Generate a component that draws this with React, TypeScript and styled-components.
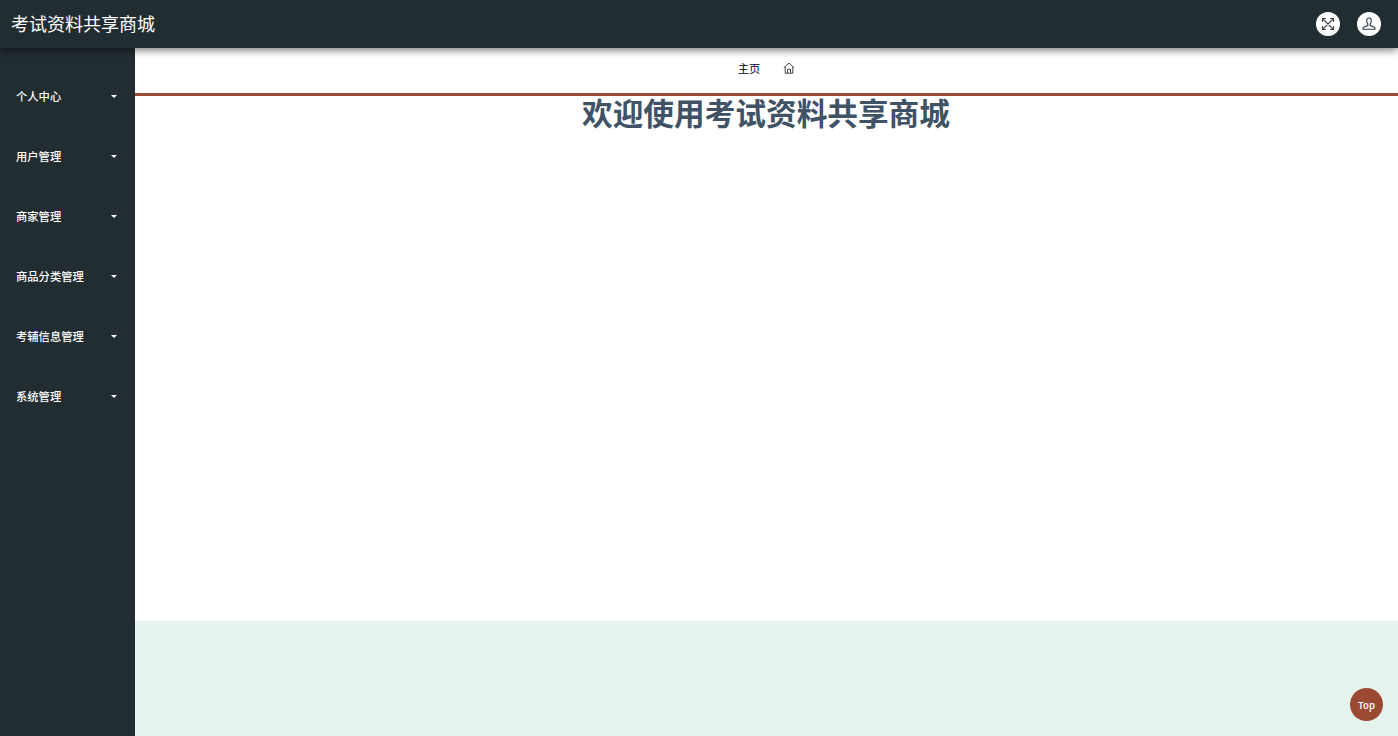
import React from "react";
import styled, { createGlobalStyle } from "styled-components";

const Global = createGlobalStyle`
  html, body { margin: 0; padding: 0; height: 100%; overflow: hidden; }
  body { font-family: "Liberation Sans", "Microsoft YaHei", "Noto Sans CJK SC", sans-serif; }
  #root { height: 100%; }
`;
const Page = styled.div`
  height: 736px; display: flex; flex-direction: column; position: relative; overflow: hidden;
`;
const Header = styled.header`
  height: 48px; flex: none; background: #222d32; display: flex; align-items: center; justify-content: space-between;
  padding: 0 16px 0 11px; position: relative; z-index: 2; box-shadow: 0 2px 8px rgba(0,0,0,.55);
`;
const Brand = styled.div`
  color: #fff; font-size: 18px; line-height: 46px; height: 48px; font-family: "Noto Sans CJK SC", sans-serif; font-weight: 400;
`;
const HeaderActions = styled.div`display: flex; gap: 17px; align-items: center; margin-right: 1px;`;
const RoundButton = styled.div`
  width: 24px; height: 24px; border-radius: 50%; background: #fff; display: flex; align-items: center; justify-content: center;
`;
const Body = styled.div`flex: 1; display: flex; min-height: 0;`;
const Sidebar = styled.nav`
  width: 135px; flex: none; background: #222d32; padding-top: 18px; box-sizing: border-box;
`;
const MenuItem = styled.div`
  height: 60px; display: flex; align-items: center; justify-content: space-between; padding: 0 18px 0 16px;
  color: #fff; font-size: 11.3px; font-weight: 500; font-family: "Noto Sans CJK SC", sans-serif;
`;
const Caret = styled.span`
  width: 0; height: 0; border-left: 3.5px solid transparent; border-right: 3.5px solid transparent; border-top: 3.5px solid #fff;
`;
const Main = styled.main`flex: 1; display: flex; flex-direction: column; min-width: 0;`;
const Content = styled.div`flex: 1; background: #fff; min-height: 0;`;
const Crumbs = styled.div`
  height: 39px; padding: 0 0 6px 0; box-sizing: content-box; border-bottom: 3px solid #9a4a33; display: flex; align-items: center; justify-content: center;
  gap: 23px; font-size: 11.3px; color: #000; font-family: "Noto Sans CJK SC", sans-serif;
`;
const Title = styled.h1`
  margin: 0; text-align: center; font-size: 30.67px; line-height: 32px; font-weight: 700; color: #3f5266;
  font-family: "Noto Sans CJK SC", sans-serif; padding-right: 1px;
`;
const Footer = styled.footer`height: 115px; flex: none; background: #e6f3ec;`;
const TopButton = styled.div`
  position: absolute; right: 15px; bottom: 15px; width: 33px; height: 33px; border-radius: 50%; background: #9a4a33;
  color: #fff; font-size: 9.5px; font-weight: 500; font-family: "Noto Sans CJK SC", sans-serif; display: flex; align-items: center; justify-content: center;
`;

const menus = ["个人中心", "用户管理", "商家管理", "商品分类管理", "考辅信息管理", "系统管理"];

export default function App() {
  return (
    <Page>
      <Global />
      <Header>
        <Brand>考试资料共享商城</Brand>
        <HeaderActions>
          <RoundButton>
            <svg width="14" height="14" viewBox="0 0 14 14" fill="none" stroke="#444" strokeWidth="1.1">
              <path d="M2 2l10 10M12 2L2 12M1.5 5V1.5H5M9 1.5h3.5V5M12.5 9v3.5H9M5 12.5H1.5V9" />
            </svg>
          </RoundButton>
          <RoundButton>
            <svg width="14" height="14" viewBox="0 0 14 14" fill="none" stroke="#2a3a48" strokeWidth="1.1">
              <path d="M4.7 3.8C4.7 2.2 5.7 1 7 1s2.3 1.2 2.3 2.8c0 1.4-.5 2.6-1.1 3.2v1.5l3.6 1.4c.7.3 1.2.8 1.2 1.6v.8H1v-.8c0-.8.5-1.3 1.2-1.6l3.6-1.4V7c-.6-.6-1.1-1.8-1.1-3.2z" />
            </svg>
          </RoundButton>
        </HeaderActions>
      </Header>
      <Body>
        <Sidebar>
          {menus.map((m) => (
            <MenuItem key={m}>
              <span>{m}</span>
              <Caret />
            </MenuItem>
          ))}
        </Sidebar>
        <Main>
          <Content>
            <Crumbs>
              <span>主页</span>
              <svg width="12" height="12" viewBox="0 0 12 12" fill="none" stroke="#444" strokeWidth="1">
                <path d="M.8 5.8L6 1l5.2 4.8M2.2 4.8v6.4h7.6V4.8M4.5 11.2V7.2h3v4" />
              </svg>
            </Crumbs>
            <Title>欢迎使用考试资料共享商城</Title>
          </Content>
          <Footer />
        </Main>
      </Body>
      <TopButton>Top</TopButton>
    </Page>
  );
}
